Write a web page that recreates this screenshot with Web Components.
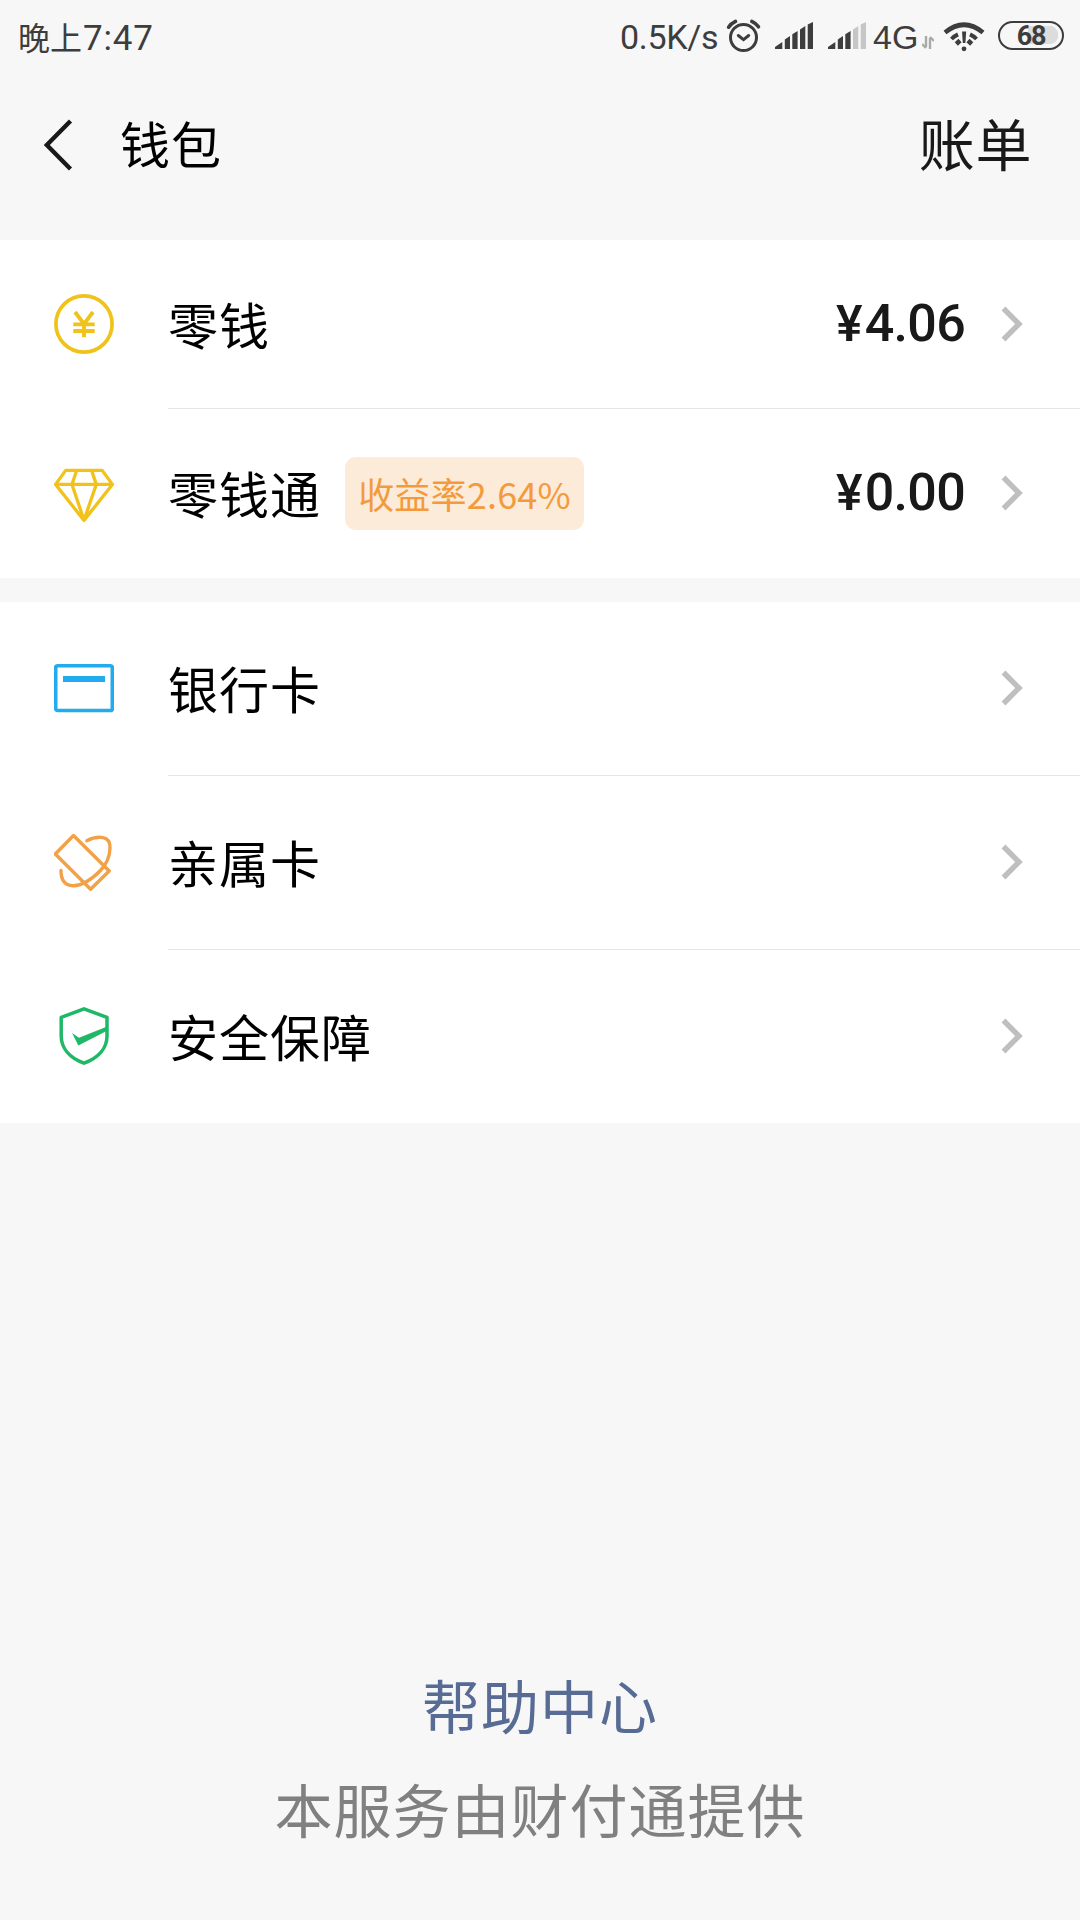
<!DOCTYPE html>
<html lang="zh-CN">
<head>
<meta charset="utf-8">
<title>钱包</title>
<style>
html,body{margin:0;padding:0;background:#f7f7f7}
body{font-family:"Noto Sans CJK SC",sans-serif;color:#000}
</style>
</head>
<body>
<wallet-page>
  <status-bar></status-bar>
  <nav-header action="账单">钱包</nav-header>
  <row-group style="--row:169px;--pad:1px">
    <wallet-row icon="coin" amount="¥4.06">零钱</wallet-row>
    <wallet-row icon="diamond" amount="¥0.00" last>零钱通<rate-badge slot="badge">收益率2.64%</rate-badge></wallet-row>
  </row-group>
  <row-group style="--row:174px;--pad:2px">
    <wallet-row icon="card">银行卡</wallet-row>
    <wallet-row icon="family">亲属卡</wallet-row>
    <wallet-row icon="shield" last style="--row:173px;--pad:1px">安全保障</wallet-row>
  </row-group>
  <page-footer link="帮助中心">本服务由财付通提供</page-footer>
</wallet-page>
<script>
const define=(name,render)=>customElements.define(name,class extends HTMLElement{
  connectedCallback(){
    if(this.shadowRoot)return;
    this.attachShadow({mode:'open'}).innerHTML=render(this);
  }
});
const ICONS={
coin:`<g stroke="#f0c31c"><circle cx="30" cy="30" r="28.1" stroke-width="3.7"/><path d="M21 18 30 30 39 18M30 29.5V43.3M19.3 30.4H40.7M19.3 37H40.7" stroke-width="3.9"/></g>`,
diamond:`<path d="M11.7 7.4H48.2L58.4 21.4 30 57.4 1.6 21.4ZM1.6 21.4H58.4M22.6 7.4 18 21.4 30 57.2 42.3 21.4 37.6 7.4" stroke="#f3c21a" stroke-width="3.3" stroke-linejoin="round"/>`,
card:`<rect x="1.7" y="7.7" width="56.6" height="44.8" rx="2" stroke="#22acef" stroke-width="3.6"/><path d="M9 21H51" stroke="#22acef" stroke-width="6"/>`,
family:`<g stroke="#f2a147" stroke-width="3.4" stroke-linecap="round" stroke-linejoin="round"><path d="M19.5 3.5 1.3 22 36.6 57.3 55.2 39Z"/><path d="M32.8 8.8C38 6 44.5 4.8 49 5.6 54 6.5 56.2 10.5 56 16 55.8 24 52.4 32.5 46 39 38.5 46.5 29.5 53.5 19.5 53.7 11.5 53.9 6.8 48.5 7 38.5"/></g>`,
shield:`<path d="M30 2.8 53 11.4V30C53 42 44.5 51.8 30 57.2 15.5 51.8 7.2 42 7.2 30V11.4Z" stroke="#1eb867" stroke-width="3.5" stroke-linejoin="round"/><path d="M18 27 25 31.8 52 21V25.3L24.4 39.4Z" fill="#1eb867"/>`
};
define('wallet-page',()=>`<style>:host{display:flex;flex-direction:column;width:1080px;height:1920px;overflow:hidden;background:#f7f7f7}</style><slot></slot>`);

define('signal-bars',el=>{
  const n=+el.getAttribute('level');
  return `<style>:host{display:block;width:39px;height:28px}svg{display:block}</style><svg width="39" height="28">${
  ['M0 25 7.3 20V27H0Z','M9.8 17.5 15 14V27H9.8Z','M17.3 12.3 22.6 9V27H17.3Z','M25 7.5 30.3 4V27H25Z','M32.7 2.5 38 0V27H32.7Z']
  .map((d,i)=>`<path d="${d}" fill="${i<n?'#3d3d3d':'#c6c6c6'}"/>`).join('')}</svg>`;
});
define('battery-level',()=>`<style>
:host{display:flex;box-sizing:border-box;width:66px;height:29px;border:2.6px solid #3d3d3d;border-radius:15px;align-items:center;justify-content:center;background:radial-gradient(circle at 49px 12px,#dcdcdc 9px,transparent 9.5px),linear-gradient(#dcdcdc,#dcdcdc) 28px 3px/21px 18px no-repeat;font:700 27px/24px Roboto,sans-serif;letter-spacing:-1.2px;color:#3d3d3d}
</style><slot></slot>`);
define('status-bar',()=>`<style>
:host{display:flex;height:74px;padding:0 16px 0 18px;align-items:flex-start;color:#3d3d3d;box-sizing:border-box}
.t{font:32px/40px "Noto Sans CJK SC",sans-serif;padding-top:17px;white-space:nowrap}
.time{flex:1;padding-top:16px}
.clock{font:35px/40px Roboto,sans-serif;letter-spacing:.8px;margin-left:1px}
.speed{letter-spacing:-.3px;font:34px/40px Roboto,sans-serif;width:101px}
.net{font:34px/40px "Liberation Sans",sans-serif;width:49px;margin-left:6px;letter-spacing:0}
svg{display:block}
</style>
<span class="t time">晚上<span class="clock">7:47</span></span>
<span class="t speed">0.5K/s</span>
<svg width="36" height="36" style="margin:18px 13px 0 5px" fill="none" stroke="#3d3d3d" stroke-width="3" stroke-linecap="round"><circle cx="17.5" cy="19.5" r="13"/><path d="M12.3 17.5 17.5 21.6 22.7 17.5"/><path d="M2.6 9.2Q5 5.5 9.5 3.4M25.8 3.4Q30.3 5.5 32.5 8.8" stroke-width="3.6"/></svg>
<signal-bars level="5" style="margin:22px 14px 0 0"></signal-bars>
<signal-bars level="3" style="margin:22px 0 0 0"></signal-bars>
<span class="t net">4G</span>
<svg width="12" height="13" style="margin:36px 9px 0 0" fill="none" stroke="#aaa" stroke-width="2.4"><path d="M4 0V11M4 12 0 8M8 13V2M8 1 12 5"/></svg>
<svg width="42" height="32" style="margin:21px 13px 0 0" fill="none" stroke="#3d3d3d"><path d="M2 11.5Q21-4 40 11.5" stroke-width="4.6"/><path d="M8.5 18Q11 15.3 15 13.4M33.5 18Q31 15.3 27 13.4" stroke-width="4"/><path d="M13.3 23 17 19.5M28.7 23 25 19.5" stroke-width="4.6"/><path d="M19 10.5H23.2L22.4 22H19.8Z" fill="#3d3d3d" stroke="none"/><circle cx="21" cy="27.8" r="2.4" fill="#3d3d3d" stroke="none"/></svg>
<battery-level style="margin-top:21px">68</battery-level>`);

define('nav-header',el=>`<style>
:host{display:flex;height:166px;box-sizing:border-box;padding:0 48px 24px 44px;align-items:center}
svg{display:block;margin-right:47px}
.title{flex:1;font-size:50px;line-height:60px;letter-spacing:1px;margin-bottom:7px}
.action{font-size:56px;line-height:66px;letter-spacing:.6px;color:#191919;margin-bottom:7px}
</style><svg width="29" height="52" fill="none" stroke="#191919" stroke-width="4.4"><path d="M26.5 2 2.8 26 26.5 50"/></svg>
<span class="title"><slot></slot></span><span class="action">${el.getAttribute('action')}</span>`);

define('row-group',()=>`<style>:host{display:flex;flex-direction:column;background:#fff;margin-bottom:24px}</style><slot></slot>`);

define('rate-badge',()=>`<style>:host{display:flex;box-sizing:border-box;height:73px;width:239px;margin-left:24px;border-radius:11px;background:#fcebd9;color:#f39b3c;align-items:center;justify-content:center;font-size:36px;line-height:40px;letter-spacing:.2px;white-space:nowrap}</style><slot></slot>`);

define('wallet-row',el=>{
  const a=el.getAttribute('amount');
  return `<style>
:host{display:flex;height:var(--row)}
.icon{width:168px;box-sizing:border-box;padding:0 0 var(--pad) 54px;display:flex;align-items:center}
.main{flex:1;box-sizing:border-box;display:flex;align-items:center;padding:0 56px calc(var(--pad) - 1px) 0;border-bottom:1px solid #e5e5e5}
:host([last]) .main{border-color:transparent}
.label{font-size:50px;line-height:60px;letter-spacing:1px;white-space:nowrap;margin-bottom:2px}
.space{flex:1}
.amount{font:500 52px/60px Roboto,sans-serif;letter-spacing:-.7px;color:#191919;margin-right:36px}
.amount i{font-style:normal;font-size:50px;letter-spacing:2.2px}
svg{display:block}
</style>
<div class="icon"><svg width="60" height="60" fill="none">${ICONS[el.getAttribute('icon')]}</svg></div>
<div class="main"><span class="label"><slot></slot></span><slot name="badge"></slot><span class="space"></span>
${a?`<span class="amount"><i>${a[0]}</i>${a.slice(1)}</span>`:''}<svg width="23" height="36" fill="none" stroke="#bfbfbf" stroke-width="5.4"><path d="M2.5 2.5 18 18 2.5 33.5"/></svg></div>`;
});
define('page-footer',el=>`<style>
:host{flex:1;display:flex;flex-direction:column;justify-content:flex-end;align-items:center;gap:34px;padding-bottom:77px;font-size:58px;line-height:70px;letter-spacing:1px;color:#808080}
.link{color:#576b95}
</style><span class="link">${el.getAttribute('link')}</span><span><slot></slot></span>`);
</script>
</body>
</html>
